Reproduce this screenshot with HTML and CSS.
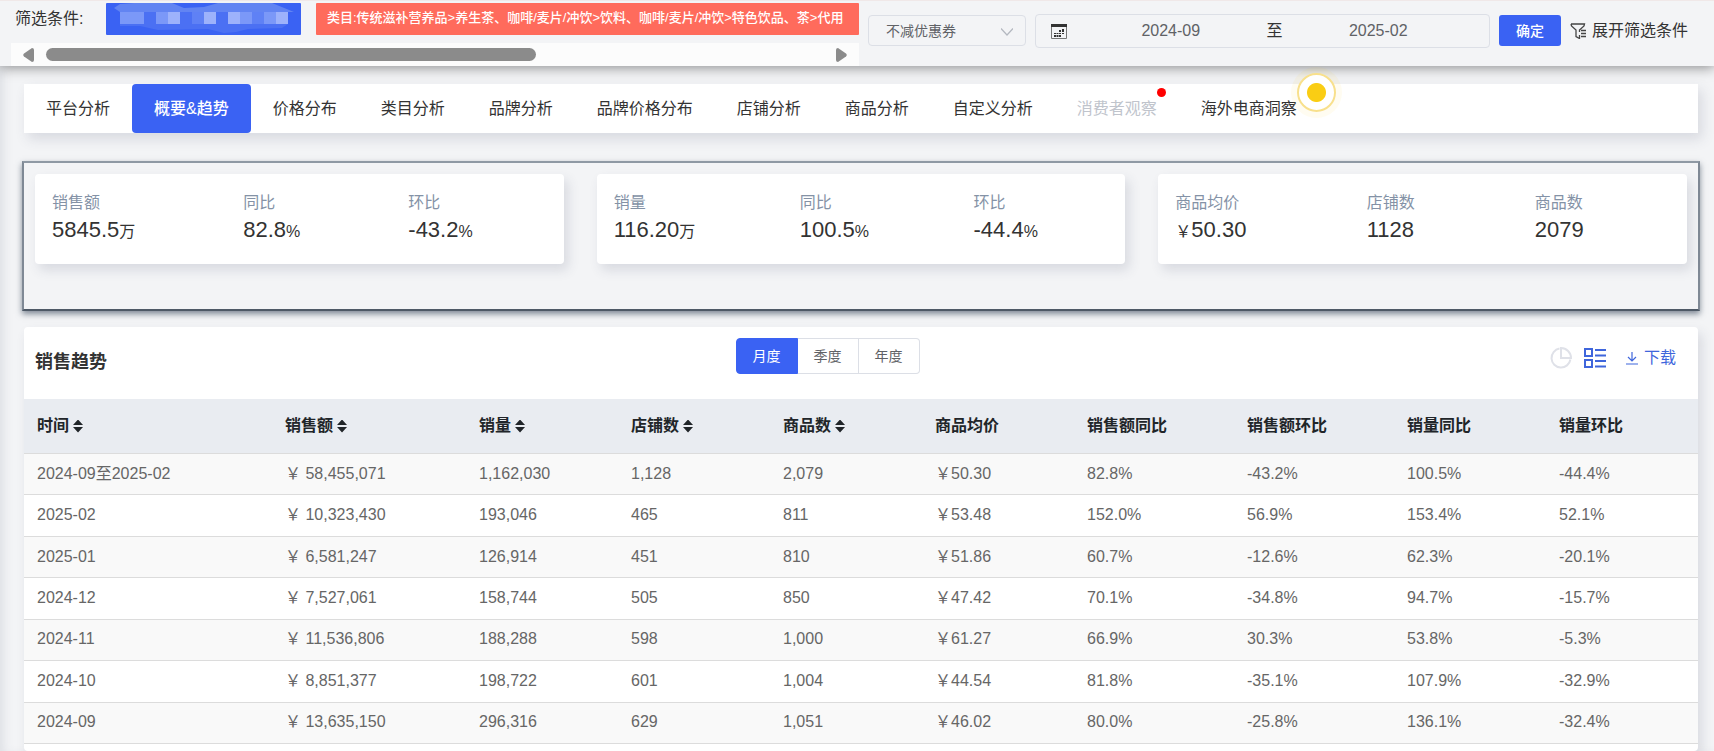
FILE: index.html
```html
<!DOCTYPE html>
<html lang="zh-CN">
  <head>
    <meta charset="UTF-8" />
    <meta name="viewport" content="width=device-width, initial-scale=1.0" />
    <title>概要&amp;趋势</title>
    <link rel="stylesheet" href="styles.css">
  </head>
  <body>
    <header class="filter-bar">
      <div class="conditions">
        <div class="condition-list">
          <span class="condition-label">筛选条件:</span>
          <span class="tag tag-primary">
            <svg class="tag-mask" width="195" height="32" viewBox="0 0 195 32" aria-hidden="true">
              <path fill="#6284f2" d="M8 5l6-4 14-1h38l12 5 20-1 14-4h54l22 9H14z" />
              <path fill="#4b70f3" d="M14 9h168v12l-6 4-34 1-12 3-12 1-16-4-50 1-18-4H14z" />
              <path fill="#7b98f8" d="M14 9h24v12H14zM50 9h24v12H50zM98 9h12v12H98zM122 9h24v12h-24zM158 9h24v12h-24z" />
              <path fill="#5f81f5" d="M86 9h12v12H86zM146 9h12v12h-12z" />
              <path fill="#9db2fb" d="M62 9h12v12H62zM98 9h12v12H98zM122 9h12v12h-12zM170 9h12v12h-12z" />
            </svg>
          </span>
          <span class="tag tag-danger">类目:传统滋补营养品&gt;养生茶、咖啡/麦片/冲饮&gt;饮料、咖啡/麦片/冲饮&gt;特色饮品、茶&gt;代用</span>
        </div>
        <div class="scrollbar">
          <svg width="11" height="14" viewBox="0 0 11 14" aria-hidden="true"><path fill="#8b8b8b" d="M9 0q2 0 2 2v10q0 2-2 2L1 8.500Q-.5 7 1 5.500z" /></svg>
          <div class="scrollbar-track"><div class="scrollbar-thumb"></div></div>
          <svg width="11" height="14" viewBox="0 0 11 14" aria-hidden="true"><path fill="#8b8b8b" d="M2 0Q0 0 0 2v10q0 2 2 2l8-5.500q1.500-1.500 0-3z" /></svg>
        </div>
      </div>
      <form class="filter-form">
        <div class="select">
          <select aria-label="优惠券">
            <option>不减优惠券</option>
          </select>
          <svg class="select-arrow" width="12" height="8" viewBox="0 0 12 8" aria-hidden="true"><path fill="none" stroke="#b4b8c0" stroke-width="1.200" d="M0 .5l6 6.500 6-6.500" /></svg>
        </div>
        <div class="date-range">
          <svg class="date-icon" width="16" height="15" viewBox="0 0 16 15" aria-hidden="true">
            <path fill="none" stroke="#777" d="M.5.500h15v14h-15z" />
            <path fill="#333" d="M0 0h16v3H0z" />
            <path fill="#333" d="M8 6h2v2H8zM11 5h2v3h-2zM3 9h2v1H3zM5.500 9h2v1h-2zM8 9h2v1H8zM11 9h2v1h-2zM3 11h2v2H3zM5.500 11h2v2h-2zM8 11h2v2H8z" />
          </svg>
          <input type="text" value="2024-09" aria-label="开始月份">
          <span>至</span>
          <input type="text" value="2025-02" aria-label="结束月份">
        </div>
        <button class="btn btn-primary" type="button">确定</button>
        <a class="expand" href="#">
          <svg width="16" height="16" viewBox="0 0 16 16" aria-hidden="true"><path fill="none" stroke="#444" stroke-width="1.300" d="M1 1h13.500l-.5 2-4.500 4v2M1 1l.5 2L6 7v6.500l3.500 2V12M11 7.500h5M11 10.500h5M11 13.500h5" /></svg>
          展开筛选条件
        </a>
      </form>
    </header>

    <main class="page">
      <nav class="tabs">
        <a class="tab" href="#">平台分析</a>
        <a class="tab active" href="#">概要&amp;趋势</a>
        <a class="tab" href="#">价格分布</a>
        <a class="tab" href="#">类目分析</a>
        <a class="tab" href="#">品牌分析</a>
        <a class="tab" href="#">品牌价格分布</a>
        <a class="tab" href="#">店铺分析</a>
        <a class="tab" href="#">商品分析</a>
        <a class="tab" href="#">自定义分析</a>
        <a class="tab disabled" href="#">消费者观察<i class="dot"></i></a>
        <a class="tab" href="#">海外电商洞察<i class="pulse"></i></a>
      </nav>

      <section class="summary">
        <div class="card">
          <div class="stat"><div class="stat-label">销售额</div><div class="stat-value">5845.5<small>万</small></div></div>
          <div class="stat"><div class="stat-label">同比</div><div class="stat-value">82.8<small>%</small></div></div>
          <div class="stat"><div class="stat-label">环比</div><div class="stat-value">-43.2<small>%</small></div></div>
        </div>
        <div class="card">
          <div class="stat"><div class="stat-label">销量</div><div class="stat-value">116.20<small>万</small></div></div>
          <div class="stat"><div class="stat-label">同比</div><div class="stat-value">100.5<small>%</small></div></div>
          <div class="stat"><div class="stat-label">环比</div><div class="stat-value">-44.4<small>%</small></div></div>
        </div>
        <div class="card">
          <div class="stat"><div class="stat-label">商品均价</div><div class="stat-value"><small>￥</small>50.30</div></div>
          <div class="stat"><div class="stat-label">店铺数</div><div class="stat-value">1128</div></div>
          <div class="stat"><div class="stat-label">商品数</div><div class="stat-value">2079</div></div>
        </div>
      </section>

      <section class="trend">
        <div class="trend-header">
          <h2>销售趋势</h2>
          <div class="radio-group">
            <label class="radio"><input type="radio" name="period" checked><span>月度</span></label>
            <label class="radio"><input type="radio" name="period"><span>季度</span></label>
            <label class="radio"><input type="radio" name="period"><span>年度</span></label>
          </div>
          <div class="tools">
            <button class="tool tool-off" type="button" aria-label="图表">
              <svg width="22" height="22" viewBox="0 0 22 22" aria-hidden="true"><path fill="none" stroke="currentColor" stroke-width="2" d="M9.500 1.600A9.500 9.500 0 1 0 20.400 12.500M11 1v10h10A10 10 0 0 0 11 1z" /></svg>
            </button>
            <button class="tool" type="button" aria-label="列表">
              <svg width="22" height="20" viewBox="0 0 22 20" aria-hidden="true"><path fill="none" stroke="currentColor" stroke-width="2" d="M1 1h7v7H1zM1 12h7v7H1zM11 2h11M11 7.500h11M11 13h11M11 18.500h11" /></svg>
            </button>
            <a class="download" href="#">
              <svg width="12" height="13" viewBox="0 0 12 13" aria-hidden="true"><path fill="none" stroke="currentColor" stroke-width="1.200" d="M6 0v9M2 5l4 4 4-4M0 12h12" /></svg>
              下载
            </a>
          </div>
        </div>

        <table class="table">
          <colgroup>
            <col class="col-time">
            <col class="col-sales">
            <col>
            <col>
            <col>
            <col>
            <col class="col-rate">
            <col class="col-rate">
            <col>
            <col>
          </colgroup>
          <thead>
            <tr>
              <th>时间<i class="sort"></i></th>
              <th>销售额<i class="sort"></i></th>
              <th>销量<i class="sort"></i></th>
              <th>店铺数<i class="sort"></i></th>
              <th>商品数<i class="sort"></i></th>
              <th>商品均价</th>
              <th>销售额同比</th>
              <th>销售额环比</th>
              <th>销量同比</th>
              <th>销量环比</th>
            </tr>
          </thead>
          <tbody>
            <tr><td>2024-09至2025-02</td><td>￥ 58,455,071</td><td>1,162,030</td><td>1,128</td><td>2,079</td><td>￥50.30</td><td>82.8%</td><td>-43.2%</td><td>100.5%</td><td>-44.4%</td></tr>
            <tr><td>2025-02</td><td>￥ 10,323,430</td><td>193,046</td><td>465</td><td>811</td><td>￥53.48</td><td>152.0%</td><td>56.9%</td><td>153.4%</td><td>52.1%</td></tr>
            <tr><td>2025-01</td><td>￥ 6,581,247</td><td>126,914</td><td>451</td><td>810</td><td>￥51.86</td><td>60.7%</td><td>-12.6%</td><td>62.3%</td><td>-20.1%</td></tr>
            <tr><td>2024-12</td><td>￥ 7,527,061</td><td>158,744</td><td>505</td><td>850</td><td>￥47.42</td><td>70.1%</td><td>-34.8%</td><td>94.7%</td><td>-15.7%</td></tr>
            <tr><td>2024-11</td><td>￥ 11,536,806</td><td>188,288</td><td>598</td><td>1,000</td><td>￥61.27</td><td>66.9%</td><td>30.3%</td><td>53.8%</td><td>-5.3%</td></tr>
            <tr><td>2024-10</td><td>￥ 8,851,377</td><td>198,722</td><td>601</td><td>1,004</td><td>￥44.54</td><td>81.8%</td><td>-35.1%</td><td>107.9%</td><td>-32.9%</td></tr>
            <tr><td>2024-09</td><td>￥ 13,635,150</td><td>296,316</td><td>629</td><td>1,051</td><td>￥46.02</td><td>80.0%</td><td>-25.8%</td><td>136.1%</td><td>-32.4%</td></tr>
          </tbody>
        </table>
      </section>
    </main>
  </body>
</html>
```
FILE: styles.css
```css
* {
  box-sizing: border-box;
}

body {
  margin: 0;
  color: #333;
  font-family: "Liberation Sans", "Noto Sans CJK SC", sans-serif;
  font-size: 16px;
  line-height: 24px;
  background: #f3f4f6;
}

a {
  color: inherit;
  text-decoration: none;
}

button,
input,
select {
  font-family: inherit;
}

svg {
  flex: none;
  display: block;
}

/* filter bar */
.filter-bar {
  position: relative;
  display: flex;
  height: 66px;
  background: #f3f4f6;
  border-top: 1px solid #f0e8e8;
  box-shadow: 0 2px 12px rgba(0, 0, 0, 0.4);
  z-index: 1;
}

.conditions {
  flex: 1;
  display: flex;
  flex-direction: column;
  justify-content: space-between;
  min-width: 0;
  padding-left: 11px;
}

.condition-list {
  display: flex;
  gap: 15px;
  padding: 2px 0 0 4px;
  overflow: hidden;
  white-space: nowrap;
}

.condition-label {
  flex: none;
  width: 76px;
  line-height: 32px;
}

.tag {
  flex: none;
  height: 32px;
  line-height: 30px;
  border-radius: 1px;
  color: #fff;
}

.tag-primary {
  width: 195px;
  background: #3a62f3;
}

.tag-danger {
  flex: 1 0 auto;
  padding: 0 11px;
  font-size: 13px;
  font-weight: 500;
  background: #ff6b5c;
}

.scrollbar {
  display: flex;
  align-items: center;
  gap: 12px;
  height: 23px;
  padding: 0 12px;
  background: #fcfcfc;
}

.scrollbar-track {
  flex: 1;
}

.scrollbar-thumb {
  width: 63%;
  height: 13px;
  border-radius: 7px;
  background: #8b8b8b;
}

.filter-form {
  display: flex;
  align-items: flex-start;
  gap: 9px;
  width: 855px;
  padding: 14px 26px 0 9px;
}

.select {
  position: relative;
  width: 158px;
}

.select select {
  width: 100%;
  height: 31px;
  padding: 0 17px;
  color: #606266;
  font-size: 14px;
  background: transparent;
  border: 1px solid #dcdfe6;
  border-radius: 4px;
  appearance: none;
}

.select-arrow {
  position: absolute;
  top: 13px;
  right: 13px;
  pointer-events: none;
}

.date-range {
  flex: 1;
  display: flex;
  align-items: center;
  min-width: 0;
  height: 34px;
  margin-top: -1px;
  padding: 0 15px;
  border: 1px solid #dcdfe6;
  border-radius: 4px;
}

.date-icon {
  margin-right: 8px;
}

.date-range input {
  flex: 1;
  min-width: 0;
  padding: 0;
  color: #606266;
  font-size: 16px;
  text-align: center;
  background: transparent;
  border: none;
  outline: none;
}

.btn {
  padding: 0 17px;
  height: 31px;
  color: #fff;
  font-size: 14px;
  font-weight: 500;
  line-height: 28px;
  border: none;
  border-radius: 3px;
  cursor: pointer;
}

.btn-primary {
  background: #3a62f3;
}

.expand {
  display: flex;
  align-items: center;
  gap: 6px;
  height: 31px;
  white-space: nowrap;
}

/* page */
.page {
  min-height: 685px;
  padding: 18px 14px 0 22px;
  box-shadow: inset 8px 0 12px -6px rgba(60, 70, 100, 0.14);
}

.tabs {
  display: flex;
  height: 49px;
  margin: 0 2px;
  background: #fff;
  box-shadow: 4px 6px 12px rgba(60, 70, 100, 0.15);
}

.tab {
  position: relative;
  padding: 0 22px;
  line-height: 49px;
}

.tab.active {
  color: #fff;
  font-weight: 500;
  background: #3a62f3;
  border-radius: 4px;
}

.tab.disabled {
  color: #c0c4cc;
}

.dot {
  position: absolute;
  top: 4px;
  right: 13px;
  width: 9px;
  height: 9px;
  border-radius: 50%;
  background: #f00;
}

.pulse {
  position: absolute;
  top: -11px;
  right: -17px;
  width: 39px;
  height: 39px;
  border: 2px solid #f8e08c;
  border-radius: 50%;
  background: radial-gradient(#facd14 9px, #fff 10px);
  box-shadow: 0 0 0 6px rgba(250, 205, 20, 0.06);
  z-index: 2;
}

/* summary */
.summary {
  display: flex;
  gap: 33px;
  height: 150px;
  margin-top: 28px;
  padding: 11px;
  border: 2px solid;
  border-color: #8f99a4 #7f8995 #4e5966 #7f8995;
  box-shadow: 0 3px 6px rgba(50, 65, 85, 0.6);
}

.card {
  flex: 1;
  display: flex;
  height: 90px;
  padding-top: 17px;
  background: #fff;
  border-radius: 4px;
  box-shadow: 4px 6px 12px rgba(60, 70, 100, 0.15);
}

.stat {
  flex: 1 1 auto;
  padding: 0 17px;
}

.stat-label {
  color: #8492a6;
}

.stat-value {
  font-size: 22px;
  line-height: 30px;
}

.stat-value small {
  font-size: 16px;
}

/* trend */
.trend {
  margin: 16px 2px 0;
  min-height: 424px;
  background: #fff;
  border-radius: 4px;
  box-shadow: 4px 6px 12px rgba(60, 70, 100, 0.15);
}

.trend-header {
  display: grid;
  grid-template-columns: 1fr auto 1fr;
  align-items: start;
  height: 72px;
  padding: 11px 22px 0 11px;
}

.trend-header h2 {
  margin: 12px 0 0;
  font-size: 18px;
  line-height: 24px;
}

.radio-group {
  display: flex;
  margin-right: 56px;
  color: #606266;
  font-size: 14px;
}

.radio {
  position: relative;
  cursor: pointer;
}

.radio input {
  position: absolute;
  margin: 0;
  opacity: 0;
}

.radio span {
  display: block;
  height: 36px;
  padding: 0 16px;
  line-height: 34px;
  border: 1px solid #dcdfe6;
  border-left-width: 0;
}

.radio:first-child span {
  border-left-width: 1px;
  border-radius: 4px 0 0 4px;
}

.radio:last-child span {
  border-radius: 0 4px 4px 0;
}

.radio input:checked + span {
  color: #fff;
  background: #3a62f3;
  border-color: #3a62f3;
}

.tools {
  display: flex;
  align-items: center;
  justify-content: flex-end;
  gap: 12px;
  height: 40px;
  color: #3f66dc;
}

.tool {
  padding: 0;
  color: inherit;
  background: none;
  border: none;
  cursor: pointer;
}

.tool-off {
  color: #dfe1e8;
}

.download {
  display: flex;
  align-items: center;
  gap: 6px;
  margin-left: 8px;
}

/* table */
.table {
  width: 100%;
  height: 345px;
  table-layout: fixed;
  border-collapse: separate;
  border-spacing: 0;
}

.table th,
.table td {
  padding: 7px 13px 8px;
  text-align: left;
  white-space: nowrap;
  border-bottom: 1px solid #dcdcdc;
}

.table th {
  height: 55px;
  color: #212529;
  background: #e9ecf1;
}

.table td {
  color: #666;
}

.table tbody tr:nth-child(odd) {
  background: #f9f9f9;
}

.col-time {
  width: 248px;
}

.col-sales {
  width: 194px;
}

.col-rate {
  width: 160px;
}

.sort {
  display: inline-block;
  width: 10px;
  height: 13px;
  margin-left: 4px;
  vertical-align: -2px;
  background: currentColor;
  clip-path: polygon(50% 0, 100% 42%, 0 42%, 0 58%, 100% 58%, 50% 100%, 0 58%, 0 42%);
}
```
